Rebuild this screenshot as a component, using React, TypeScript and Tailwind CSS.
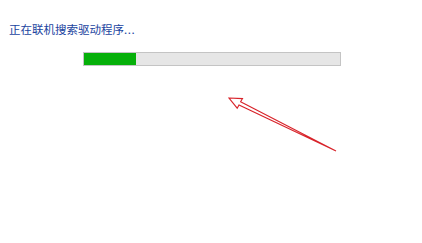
export default function App() {
  return (
    <div className="relative h-[243px] w-[422px] overflow-hidden bg-white">
      <div className="pl-[9px] pt-[22px]">
        <p
          className="text-[11.5px] leading-[14px] text-[#1a44a0]"
          style={{ fontFamily: '"Noto Sans CJK SC", "Microsoft YaHei", sans-serif' }}
        >
          正在联机搜索驱动程序<span className="tracking-[0.5px]">...</span>
        </p>
        <div className="ml-[74px] mt-[16px] h-[14px] w-[258px] border border-[#c4c4c4] bg-[#e6e6e6]">
          <div className="h-full w-[52px] bg-[#06b00a]" />
        </div>
      </div>

      {/* red annotation arrow */}
      <svg className="absolute left-0 top-0" width="422" height="243" viewBox="0 0 422 243">
        <polygon
          points="229,98 242.5,98.6 240.6,101.8 336,151 239,104.9 237.2,108.2"
          fill="none"
          stroke="#d8232a"
          strokeWidth="1.1"
          strokeLinejoin="miter"
        />
      </svg>
    </div>
  );
}
